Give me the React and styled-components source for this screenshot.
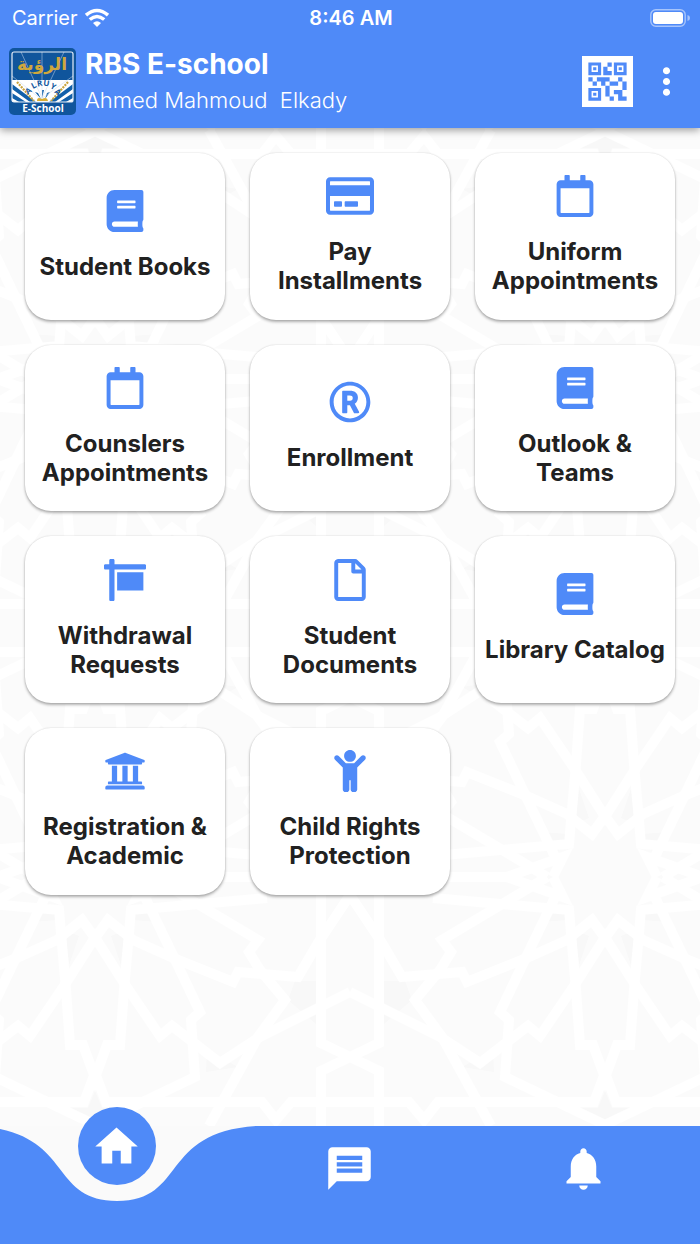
import React from "react";
import styled, { createGlobalStyle } from "styled-components";
import {
  FaBook,
  FaChild,
  FaRegCalendar,
  FaRegCreditCard,
  FaRegFile,
  FaRegRegistered,
  FaSign,
  FaUniversity,
} from "react-icons/fa";
import { MdHome, MdMessage, MdMoreVert, MdNotifications, MdQrCode2 } from "react-icons/md";

const BLUE = "#4f8af8";

const GlobalStyle = createGlobalStyle`
  * { box-sizing: border-box; }
  body {
    margin: 0;
    background: #fafafa;
    font-family: Inter, "Liberation Sans", sans-serif;
    color: #212121;
  }
  button { font: inherit; color: inherit; border: 0; padding: 0; cursor: pointer; }
`;

const Page = styled.div`
  min-height: 100vh;
  display: flex;
  flex-direction: column;
`;

const Header = styled.header`
  position: relative;
  z-index: 1;
  background: ${BLUE};
  color: #fff;
  padding-bottom: 12px;
  box-shadow: 0 2px 8px rgba(0, 0, 0, 0.4);
`;

const StatusBar = styled.div`
  display: grid;
  grid-template-columns: 1fr auto 1fr;
  align-items: center;
  height: 36px;
  padding: 0 10px 0 12px;
  font-size: 20px;
  line-height: 24px;
`;

const Carrier = styled.span`
  display: flex;
  align-items: center;
  gap: 6px;
`;

const Clock = styled.time`
  font-weight: 600;
`;

const BatterySlot = styled.span`
  justify-self: end;
  display: flex;
`;

const AppBar = styled.div`
  display: flex;
  align-items: center;
  height: 80px;
  padding: 10px 12px 0 9px;
  gap: 9px;
`;

const Titles = styled.div`
  flex: 1;
  min-width: 0;
  padding-top: 2px;
`;

const Title = styled.h1`
  margin: 0;
  font-size: 28px;
  line-height: 36px;
  font-weight: 700;
`;

const UserName = styled.p`
  margin: 0;
  font-size: 22px;
  line-height: 36px;
  font-weight: 300;
  white-space: pre;
`;

const QrButton = styled.button`
  display: flex;
  background: #fff;
  color: ${BLUE};
`;

const MenuButton = styled.button`
  display: flex;
  background: none;
  margin-left: 3px;
`;

const Main = styled.main`
  position: relative;
  flex: 1;
  padding: 25px;
`;

const Backdrop = styled.svg`
  position: absolute;
  inset: 0;
  width: 100%;
  height: 100%;
`;

const Grid = styled.div`
  position: relative;
  display: grid;
  grid-template-columns: repeat(3, minmax(0, 1fr));
  gap: 25px;
`;

const Card = styled.button`
  aspect-ratio: 6 / 5;
  display: flex;
  flex-direction: column;
  align-items: center;
  justify-content: center;
  gap: 20px;
  padding-bottom: 2px;
  background: #fff;
  border-radius: 26px;
  box-shadow: 0 2px 3px rgba(0, 0, 0, 0.3), 0 0 2px rgba(0, 0, 0, 0.14);
`;

const CardIcon = styled.span`
  display: flex;
  align-items: center;
  justify-content: center;
  height: 42px;
  color: ${BLUE};

  svg {
    flex: none;
    height: ${(p) => (p.$large ? "48px" : "42px")};
    width: auto;
  }
`;

const CardLabel = styled.span`
  font-size: 24px;
  line-height: 29px;
  font-weight: 700;
  text-align: center;
  white-space: pre-line;
`;

const Nav = styled.nav`
  position: relative;
  display: grid;
  grid-template-columns: repeat(3, 1fr);
  justify-items: center;
  align-items: start;
  height: 118px;
  color: #fff;
`;

const NavCurve = styled.svg`
  position: absolute;
  inset: 0;
  width: 100%;
  height: 100%;
`;

const NavButton = styled.button`
  position: relative;
  display: flex;
  align-items: center;
  justify-content: center;
  width: 78px;
  height: 78px;
  border-radius: 50%;
  margin-top: ${(p) => (p.$active ? "-19px" : "3px")};
  background: ${(p) => (p.$active ? BLUE : "none")};
`;

const quarterLines = [
  "M29 -5V166L0 180L29 194V254",
  "M0 115L92 161L130 186L178 149L190 159L226 106L266 43L284 54",
  "M0 18L32 66L52 100L112 95L117 105L177 81L217 63L242 43L255 61L289 113",
  "M83 21L219 33L226 113L230 168H243L264 225",
  "M255 196L244 225H88L74 243L59 225H0",
  "M210 10L181 70L150 135L159 143L155 200L266 253",
  "M197 0L159 23L92 63L101 75L90 93L65 123L92 160L141 249",
  "M83 0L157 0L213 20L203 0",
];

const quarterShadows =
  "M34 104L55 104L62 123L34 147ZM112 190L143 173L144 195ZM225 53L239 59L229 88ZM192 45L203 24L217 31L217 43ZM255 214L264 231L282 231L255 244L220 231L248 231Z";

function Quarter() {
  return (
    <g>
      <path d={quarterShadows} fill="#f8f8f8" />
      <g fill="none" stroke="#fff" strokeWidth="10">
        {quarterLines.map((d) => (
          <path key={d} d={d} />
        ))}
      </g>
    </g>
  );
}

function GeometricBackdrop() {
  return (
    <Backdrop aria-hidden="true">
      <defs>
        <clipPath id="quarter"><path d="M0 0H255V249H0Z" /></clipPath>
        <pattern id="lattice" x="-160" y="2" width="510" height="498" patternUnits="userSpaceOnUse">
          {[
            "translate(0 249)",
            "translate(0 249) scale(1 -1)",
            "translate(510 249) scale(-1 1)",
            "translate(510 249) scale(-1 -1)",
          ].map((t) => (
            <g key={t} transform={t} clipPath="url(#quarter)">
              <Quarter />
            </g>
          ))}
        </pattern>
      </defs>
      <rect width="100%" height="100%" fill="#fbfbfb" />
      <rect width="100%" height="100%" fill="url(#lattice)" />
    </Backdrop>
  );
}

function Wifi() {
  return (
    <svg width="26" height="20" viewBox="0 0 26 20" fill="none" stroke="#fff" aria-label="Wi-Fi">
      <path d="M2 7.2Q13-2.2 24 7.2" strokeWidth="3.6" />
      <path d="M5.8 11.6Q13 5.2 20.2 11.6" strokeWidth="3.4" />
      <path d="M9 15Q13 11.6 17 15L13 19Z" fill="#fff" stroke="none" />
    </svg>
  );
}

function Battery() {
  return (
    <svg width="40" height="18" viewBox="0 0 40 18" aria-label="Battery full">
      <rect x="0.8" y="0.8" width="34.4" height="16.4" rx="5" fill="none" stroke="#fff" strokeOpacity="0.5" strokeWidth="1.4" />
      <rect x="3" y="3" width="30" height="12" rx="3" fill="#fff" />
      <path d="M37.5 6Q40 6.5 40 9T37.5 12Z" fill="#fff" fillOpacity="0.5" />
    </svg>
  );
}

const archLetters = [
  ["A", 21, 45, -40],
  ["L", 26, 40, -28],
  ["R", 31, 38, -10],
  ["U", 37, 38, 8],
  ["Y", 43, 41, 28],
  ["A", 47, 46, 42],
];

function SchoolLogo() {
  return (
    <svg width="67" height="67" viewBox="0 0 67 67" role="img" aria-label="Alru'ya E-School">
      <rect width="67" height="67" rx="5" fill="#10559c" />
      <path d="M3 32H64V54H3Z" fill="#fff" />
      <path
        d="M3 36L27 54H21L3 41ZM3 45L17 54H10L3 50ZM64 36L40 54H46L64 41ZM64 45L50 54H57L64 50ZM26 44L32 51L29 45ZM33 42V50L35 42ZM41 44L36 51L38 45Z"
        fill="#1260aa"
      />
      <path d="M8 34L25 53M59 34L42 53" stroke="#c9a43d" strokeWidth="2.2" strokeDasharray="2 1" />
      <path d="M12 4L33 50L55 4M33 50V4M3 28L32 51L64 28" fill="none" stroke="#c8d9ed" strokeWidth="0.5" />
      <path d="M28 53Q28 48 33 51Q38 48 39 53Z" fill="#d8ad35" />
      <rect x="3" y="4" width="61" height="50" rx="2" fill="none" stroke="#e8eff7" strokeWidth="1.2" />
      <text x="33" y="22" textAnchor="middle" fontFamily="'DejaVu Sans', sans-serif" fontSize="17" fontWeight="700" fill="#cfa73c">الرؤية</text>
      <g fill="#10559c" fontFamily="'Open Sans', sans-serif" fontSize="8" fontWeight="700" textAnchor="middle">
        {archLetters.map(([c, x, y, r]) => (
          <text key={x} x={x} y={y} transform={`rotate(${r} ${x} ${y})`}>{c}</text>
        ))}
      </g>
      <text x="34" y="64" textAnchor="middle" fontFamily="'Open Sans', sans-serif" fontSize="10" fontWeight="700" fill="#fff">E-School</text>
    </svg>
  );
}

const services = [
  { label: "Student Books", Icon: FaBook },
  { label: "Pay\nInstallments", Icon: FaRegCreditCard, large: true },
  { label: "Uniform\nAppointments", Icon: FaRegCalendar },
  { label: "Counslers\nAppointments", Icon: FaRegCalendar },
  { label: "Enrollment", Icon: FaRegRegistered },
  { label: "Outlook &\nTeams", Icon: FaBook },
  { label: "Withdrawal\nRequests", Icon: FaSign },
  { label: "Student\nDocuments", Icon: FaRegFile },
  { label: "Library Catalog", Icon: FaBook },
  { label: "Registration &\nAcademic", Icon: FaUniversity },
  { label: "Child Rights\nProtection", Icon: FaChild },
];

export default function App() {
  return (
    <Page>
      <GlobalStyle />
      <Header>
        <StatusBar>
          <Carrier>Carrier <Wifi /></Carrier>
          <Clock>8:46 AM</Clock>
          <BatterySlot><Battery /></BatterySlot>
        </StatusBar>
        <AppBar>
          <SchoolLogo />
          <Titles>
            <Title>RBS E-school</Title>
            <UserName>{"Ahmed Mahmoud  Elkady"}</UserName>
          </Titles>
          <QrButton aria-label="QR code"><MdQrCode2 size={51} /></QrButton>
          <MenuButton aria-label="More options"><MdMoreVert size={43} /></MenuButton>
        </AppBar>
      </Header>
      <Main>
        <GeometricBackdrop />
        <Grid>
          {services.map(({ label, Icon, large }) => (
            <Card key={label}>
              <CardIcon $large={large}><Icon aria-hidden="true" /></CardIcon>
              <CardLabel>{label}</CardLabel>
            </Card>
          ))}
        </Grid>
      </Main>
      <Nav aria-label="Main">
        <NavCurve viewBox="0 0 700 118" preserveAspectRatio="none" aria-hidden="true">
          <path d="M-24 0C75 6 47 75 117 75C187 75 159 6 257 0H700V118H-24Z" fill={BLUE} />
        </NavCurve>
        <NavButton $active aria-label="Home" aria-current="page"><MdHome size={51} /></NavButton>
        <NavButton aria-label="Messages"><MdMessage size={51} /></NavButton>
        <NavButton aria-label="Notifications"><MdNotifications size={51} /></NavButton>
      </Nav>
    </Page>
  );
}
